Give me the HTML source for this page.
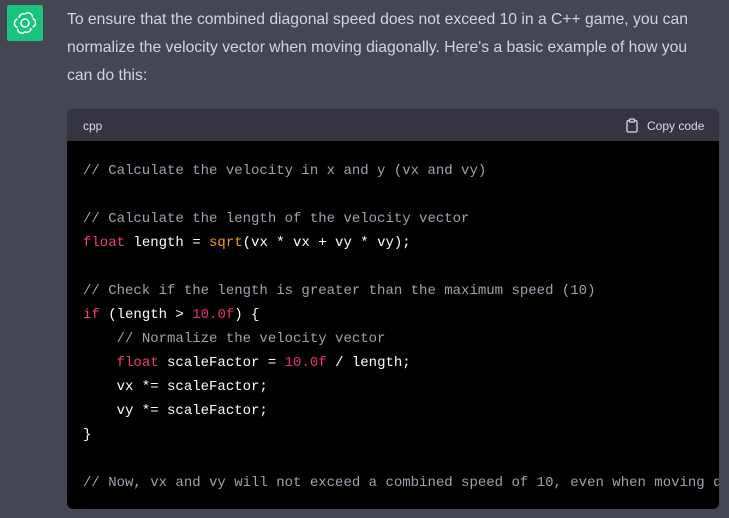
<html><head><style>
body{margin:0;width:729px;height:518px;background:#444654;overflow:hidden;font-family:"Liberation Sans",sans-serif;position:relative}
.logo{position:absolute;left:7px;top:5px;width:36px;height:36px;background:#19c37d;border-radius:2px;display:flex;align-items:center;justify-content:center}
.p{position:absolute;left:67px;top:6px;width:670px;color:#d1d5db;font-size:15.7px;line-height:28px;white-space:nowrap}
.box{position:absolute;left:67px;top:109px;width:652px;height:400px;background:#000;border-radius:6px 6px 6px 6px;overflow:hidden}
.hd{height:32px;background:#343541;color:#d9d9e3;font-size:12px;position:relative}
.hd .l{position:absolute;left:16px;top:10px}
.hd .r{position:absolute;left:558px;top:9px;display:flex;align-items:center;gap:8px}
pre{margin:0;padding:18px 0 0 16px;font-family:"Liberation Mono",monospace;font-size:14px;line-height:24px;color:#fff;white-space:pre}
.c{color:#9ca3af}.k{color:#e9417a}.f{color:#f59e0b}.n{color:#df3079}
</style></head><body>
<div class="logo"><svg width="24" height="24" viewBox="0 0 24 24" fill="none" stroke="#fff" stroke-width="1.5"><circle cx="12" cy="12" r="4"/><path d="M12 3a4.5 4.5 0 0 1 7.5 3.5M19.5 7.5a4.5 4.5 0 0 1 0 8.5M18 17a4.5 4.5 0 0 1-7 3.5M12 21a4.5 4.5 0 0 1-7.5-3.5M4.5 16.5a4.5 4.5 0 0 1 0-8.5M6 7a4.5 4.5 0 0 1 6-4"/></svg></div>
<div class="p">To ensure that the combined diagonal speed does not exceed 10 in a C++ game, you can<br>normalize the velocity vector when moving diagonally. Here's a basic example of how you<br>can do this:</div>
<div class="box"><div class="hd"><span class="l">cpp</span><span class="r"><svg width="14" height="15" viewBox="0 0 14 15" fill="none" stroke="#d9d9e3" stroke-width="1.3"><rect x="2" y="2.5" width="10" height="11.5" rx="1.5"/><rect x="4.5" y="1" width="5" height="3" rx="0.8" fill="#343541"/></svg>Copy code</span></div>
<pre><span class="c">// Calculate the velocity in x and y (vx and vy)</span>

<span class="c">// Calculate the length of the velocity vector</span>
<span class="k">float</span> length = <span class="f">sqrt</span>(vx * vx + vy * vy);

<span class="c">// Check if the length is greater than the maximum speed (10)</span>
<span class="k">if</span> (length &gt; <span class="n">10.0f</span>) {
    <span class="c">// Normalize the velocity vector</span>
    <span class="k">float</span> scaleFactor = <span class="n">10.0f</span> / length;
    vx *= scaleFactor;
    vy *= scaleFactor;
}

<span class="c">// Now, vx and vy will not exceed a combined speed of 10, even when moving diagonally</span></pre></div>
</body></html>
